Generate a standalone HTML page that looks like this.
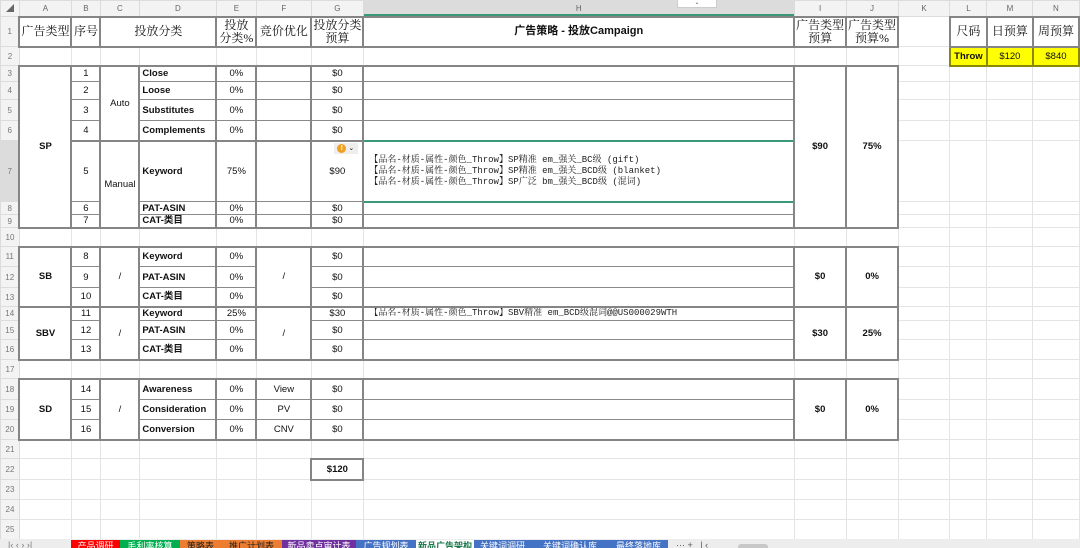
<!DOCTYPE html>
<html><head><meta charset="utf-8"><style>
body{margin:0;width:1080px;height:548px;overflow:hidden;background:#fff;font-family:"Liberation Sans","Noto Sans CJK SC",sans-serif;position:relative}
table{position:absolute;left:0;top:0;border-collapse:collapse;table-layout:fixed}
td{border:1px solid #e4e4e4;padding:0;font-size:9.5px;text-align:center;vertical-align:middle;overflow:hidden;white-space:nowrap;color:#111;line-height:11px}
tr.h td{background:#f3f3f3;color:#666;font-size:8px;border-color:#dcdcdc}
td.rh{background:#f3f3f3;color:#777;font-size:8px;border-color:#dcdcdc}
.b{border:2px solid #858585}
.i{border-left:2px solid #858585;border-right:2px solid #858585;border-top:1px solid #8a8a8a;border-bottom:1px solid #8a8a8a}
.ft{border-top:2px solid #858585}
.lb{border-bottom:2px solid #858585}
.cn{font-family:"Liberation Serif","Noto Serif CJK SC",serif;font-size:12px;line-height:13px}
.bd{font-weight:bold}
.l{text-align:left;padding-left:2px}
.y{background:#ffff00;font-weight:bold}
.mono{font-family:"Liberation Mono","Noto Serif CJK SC",monospace;font-size:9px;text-align:left;padding-left:5px;line-height:11px;color:#222}
.tabs{position:absolute;left:0;top:539px;width:1080px;height:9px;background:#ededed;overflow:hidden}
.tab{position:absolute;top:1px;height:9px;font-size:9px;color:#fff;text-align:center;line-height:12px;overflow:hidden}
</style></head><body>
<table>
<colgroup><col style="width:19px"><col style="width:52px"><col style="width:29px"><col style="width:39px"><col style="width:77px"><col style="width:40px"><col style="width:55px"><col style="width:52px"><col style="width:431px"><col style="width:52px"><col style="width:52px"><col style="width:52px"><col style="width:37px"><col style="width:46px"><col style="width:46px"></colgroup>
<tr class="h" style="height:16px"><td>◢</td><td>A</td><td>B</td><td>C</td><td>D</td><td>E</td><td>F</td><td>G</td><td style="background:#dcdcdc;box-shadow:inset 0 -2px 0 #3a9a78">H</td><td>I</td><td>J</td><td>K</td><td>L</td><td>M</td><td>N</td></tr>
<tr style="height:30px"><td class="rh">1</td><td class="b cn">广告类型</td><td class="b cn">序号</td><td class="b cn" colspan="2">投放分类</td><td class="b cn">投放<br>分类%</td><td class="b cn">竞价优化</td><td class="b cn">投放分类<br>预算</td><td class="b bd" style="font-size:11px">广告策略 - 投放Campaign</td><td class="b cn">广告类型<br>预算</td><td class="b cn">广告类型<br>预算%</td><td></td><td class="b cn">尺码</td><td class="b cn">日预算</td><td class="b cn">周预算</td></tr>
<tr style="height:19px"><td class="rh">2</td><td></td><td></td><td></td><td></td><td></td><td></td><td></td><td></td><td></td><td></td><td></td><td class="b y" style="border-color:#8a8a00">Throw</td><td class="b y" style="font-weight:normal;border-color:#8a8a00">$120</td><td class="b y" style="font-weight:normal;border-color:#8a8a00">$840</td></tr>
<tr style="height:16px"><td class="rh">3</td><td class="b bd" rowspan="7">SP</td><td class="i ft">1</td><td class="b" rowspan="4">Auto</td><td class="i ft bd l">Close</td><td class="i ft">0%</td><td class="i ft"></td><td class="i ft">$0</td><td class="i ft"></td><td class="b bd" rowspan="7">$90</td><td class="b bd" rowspan="7">75%</td><td></td><td></td><td></td><td></td></tr>
<tr style="height:18px"><td class="rh">4</td><td class="i">2</td><td class="i bd l">Loose</td><td class="i">0%</td><td class="i"></td><td class="i">$0</td><td class="i"></td><td></td><td></td><td></td><td></td></tr>
<tr style="height:21px"><td class="rh">5</td><td class="i">3</td><td class="i bd l">Substitutes</td><td class="i">0%</td><td class="i"></td><td class="i">$0</td><td class="i"></td><td></td><td></td><td></td><td></td></tr>
<tr style="height:20px"><td class="rh">6</td><td class="i">4</td><td class="i bd l">Complements</td><td class="i">0%</td><td class="i"></td><td class="i">$0</td><td class="i"></td><td></td><td></td><td></td><td></td></tr>
<tr style="height:61px"><td class="rh" style="background:#dcdcdc">7</td><td class="i ft">5</td><td class="b" rowspan="3">Manual</td><td class="i ft bd l">Keyword</td><td class="i ft">75%</td><td class="i ft"></td><td class="i ft" style="position:relative">$90<span style="position:absolute;right:4px;top:1px;width:24px;height:11px;background:#eee;font-size:7px;line-height:11px;text-align:left"><span style="display:inline-block;width:9px;height:9px;border-radius:50%;background:#f0a020;color:#fff;text-align:center;line-height:9px;font-weight:bold;margin:1px 2px 0 3px">!</span>⌄</span></td><td class="mono" style="border:2px solid #3a9a78">【品名-材质-属性-颜色_Throw】SP精准 em_强关_BC级 (gift)<br>【品名-材质-属性-颜色_Throw】SP精准 em_强关_BCD级 (blanket)<br>【品名-材质-属性-颜色_Throw】SP广泛 bm_强关_BCD级 (混词)</td><td></td><td></td><td></td><td></td></tr>
<tr style="height:13px"><td class="rh">8</td><td class="i">6</td><td class="i bd l">PAT-ASIN</td><td class="i">0%</td><td class="i"></td><td class="i">$0</td><td class="i"></td><td></td><td></td><td></td><td></td></tr>
<tr style="height:13px"><td class="rh">9</td><td class="i lb">7</td><td class="i lb bd l">CAT-类目</td><td class="i lb">0%</td><td class="i lb"></td><td class="i lb">$0</td><td class="i lb"></td><td></td><td></td><td></td><td></td></tr>
<tr style="height:19px"><td class="rh">10</td><td></td><td></td><td></td><td></td><td></td><td></td><td></td><td></td><td></td><td></td><td></td><td></td><td></td><td></td></tr>
<tr style="height:20px"><td class="rh">11</td><td class="b bd" rowspan="3">SB</td><td class="i ft">8</td><td class="b" rowspan="3">/</td><td class="i ft bd l">Keyword</td><td class="i ft">0%</td><td class="b" rowspan="3">/</td><td class="i ft">$0</td><td class="i ft"></td><td class="b bd" rowspan="3">$0</td><td class="b bd" rowspan="3">0%</td><td></td><td></td><td></td><td></td></tr>
<tr style="height:21px"><td class="rh">12</td><td class="i">9</td><td class="i bd l">PAT-ASIN</td><td class="i">0%</td><td class="i">$0</td><td class="i"></td><td></td><td></td><td></td><td></td></tr>
<tr style="height:19px"><td class="rh">13</td><td class="i lb">10</td><td class="i lb bd l">CAT-类目</td><td class="i lb">0%</td><td class="i lb">$0</td><td class="i lb"></td><td></td><td></td><td></td><td></td></tr>
<tr style="height:14px"><td class="rh">14</td><td class="b bd" rowspan="3">SBV</td><td class="i ft">11</td><td class="b" rowspan="3">/</td><td class="i ft bd l">Keyword</td><td class="i ft">25%</td><td class="b" rowspan="3">/</td><td class="i ft">$30</td><td class="i ft mono">【品名-材质-属性-颜色_Throw】SBV精准 em_BCD级混词@@US000029WTH</td><td class="b bd" rowspan="3">$30</td><td class="b bd" rowspan="3">25%</td><td></td><td></td><td></td><td></td></tr>
<tr style="height:19px"><td class="rh">15</td><td class="i">12</td><td class="i bd l">PAT-ASIN</td><td class="i">0%</td><td class="i">$0</td><td class="i"></td><td></td><td></td><td></td><td></td></tr>
<tr style="height:20px"><td class="rh">16</td><td class="i lb">13</td><td class="i lb bd l">CAT-类目</td><td class="i lb">0%</td><td class="i lb">$0</td><td class="i lb"></td><td></td><td></td><td></td><td></td></tr>
<tr style="height:19px"><td class="rh">17</td><td></td><td></td><td></td><td></td><td></td><td></td><td></td><td></td><td></td><td></td><td></td><td></td><td></td><td></td></tr>
<tr style="height:21px"><td class="rh">18</td><td class="b bd" rowspan="3">SD</td><td class="i ft">14</td><td class="b" rowspan="3">/</td><td class="i ft bd l">Awareness</td><td class="i ft">0%</td><td class="i ft">View</td><td class="i ft">$0</td><td class="i ft"></td><td class="b bd" rowspan="3">$0</td><td class="b bd" rowspan="3">0%</td><td></td><td></td><td></td><td></td></tr>
<tr style="height:20px"><td class="rh">19</td><td class="i">15</td><td class="i bd l">Consideration</td><td class="i">0%</td><td class="i">PV</td><td class="i">$0</td><td class="i"></td><td></td><td></td><td></td><td></td></tr>
<tr style="height:20px"><td class="rh">20</td><td class="i lb">16</td><td class="i lb bd l">Conversion</td><td class="i lb">0%</td><td class="i lb">CNV</td><td class="i lb">$0</td><td class="i lb"></td><td></td><td></td><td></td><td></td></tr>
<tr style="height:19px"><td class="rh">21</td><td></td><td></td><td></td><td></td><td></td><td></td><td></td><td></td><td></td><td></td><td></td><td></td><td></td><td></td></tr>
<tr style="height:21px"><td class="rh">22</td><td></td><td></td><td></td><td></td><td></td><td></td><td class="b bd">$120</td><td></td><td></td><td></td><td></td><td></td><td></td><td></td></tr>
<tr style="height:20px"><td class="rh">23</td><td></td><td></td><td></td><td></td><td></td><td></td><td></td><td></td><td></td><td></td><td></td><td></td><td></td><td></td></tr>
<tr style="height:20px"><td class="rh">24</td><td></td><td></td><td></td><td></td><td></td><td></td><td></td><td></td><td></td><td></td><td></td><td></td><td></td><td></td></tr>
<tr style="height:20px"><td class="rh">25</td><td></td><td></td><td></td><td></td><td></td><td></td><td></td><td></td><td></td><td></td><td></td><td></td><td></td><td></td></tr>
</table>
<div style="position:absolute;left:677px;top:0;width:38px;height:7px;background:#fff;border:1px solid #ccc;border-top:none;font-size:6px;text-align:center;line-height:6px;color:#555">⌄</div>
<div class="tabs">
<div style="position:absolute;left:8px;top:0;font-size:9px;color:#777;line-height:12px">|‹ ‹ › ›|</div>
<div class="tab" style="left:71px;width:49px;background:#ff0000">产品调研</div>
<div class="tab" style="left:120px;width:60px;background:#00b050">毛利率核算</div>
<div class="tab" style="left:180px;width:41px;background:#ed7d31;color:#222">策略表</div>
<div class="tab" style="left:221px;width:61px;background:#ed7d31;color:#222">推广计划表</div>
<div class="tab" style="left:282px;width:74px;background:#7030a0">新品卖点审计表</div>
<div class="tab" style="left:356px;width:60px;background:#4472c4">广告规划表</div>
<div class="tab" style="left:416px;width:58px;background:#fff;color:#1a7a4c;font-weight:bold">新品广告架构</div>
<div class="tab" style="left:474px;width:57px;background:#4472c4">关键词调研</div>
<div class="tab" style="left:531px;width:78px;background:#4472c4">关键词确认库</div>
<div class="tab" style="left:609px;width:59px;background:#4472c4">最终落地库</div>
<div style="position:absolute;left:676px;top:0;font-size:9px;color:#555;line-height:12px">··· +&nbsp;&nbsp; | ‹</div>
<div style="position:absolute;left:738px;top:5px;width:30px;height:6px;background:#c8c8c8;border-radius:3px"></div>
</div>
</body></html>
